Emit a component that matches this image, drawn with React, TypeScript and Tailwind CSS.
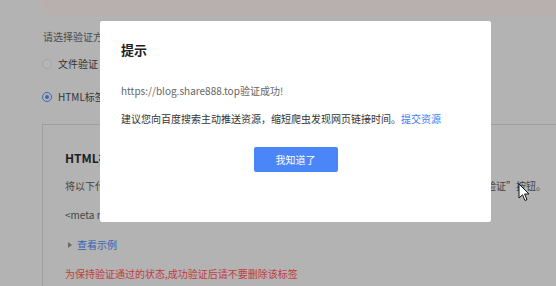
import React from 'react';

const font = { fontFamily: '"Noto Sans CJK SC", "Noto Sans", sans-serif' };

function Radio({ checked, label }: { checked?: boolean; label: string }) {
  return (
    <div className="flex items-center gap-[6px] h-[16px]">
      {checked ? (
        <span className="flex h-[10px] w-[10px] items-center justify-center rounded-full border border-[#4067b0]">
          <span className="h-[4px] w-[4px] rounded-full bg-[#4067b0]" />
        </span>
      ) : (
        <span className="h-[10px] w-[10px] rounded-full border border-[#a6a6a6] bg-[#b6b6b6]" />
      )}
      <span className="text-[10px] leading-[16px] text-[#333]">{label}</span>
    </div>
  );
}

function Cursor() {
  return (
    <svg className="absolute left-[518px] top-[183px]" width="13" height="19" viewBox="0 0 13 19">
      <path d="M1 1 L1 15 L4.5 11.8 L7 17.5 L9 16.6 L6.6 11 L11 11 Z" fill="#fff" stroke="#111" strokeWidth="1" strokeLinejoin="round" />
    </svg>
  );
}

export default function App() {
  return (
    <div className="relative h-[286px] w-[556px] overflow-hidden bg-[#b3b3b3]" style={font}>
      {/* page under the mask */}
      <div className="ml-[42px] h-[15px] bg-[#b8afaf]" />
      <div className="mt-[16px] pl-[43px] text-[10px] leading-[12px] text-[#4d4d4d]">请选择验证方式</div>
      <div className="ml-[100px] mt-[-1px] h-[13px] w-[2px] bg-[#4a7ad8]" />
      <div className="mt-[1px] pl-[42px]">
        <Radio label="文件验证" />
      </div>
      <div className="mt-[17px] pl-[42px]">
        <Radio checked label="HTML标签验证" />
      </div>
      <div className="ml-[42px] mt-[19px] h-[200px] border-l border-t border-[#9f9f9f] pl-[22px] pt-[24px]">
        <div className="text-[12px] font-bold leading-[18px] text-[#1e1e1e]">HTML标签验证</div>
        <div className="mt-[12px] flex justify-between pr-[10px] text-[10px] leading-[14px] text-[#444]">
          <span>将以下代码添加到您的网站首页HTML代码的head标签中</span>
          <span>完成后点击“验证”按钮。</span>
        </div>
        <div className="mt-[15px] text-[10px] leading-[14px] text-[#444]">&lt;meta name="baidu-site-verification" /&gt;</div>
        <div className="mt-[16px] flex items-center gap-[5px] pl-[3px] text-[10px] leading-[14px] text-[#3a61b2]">
          <span className="h-0 w-0 border-y-[3px] border-l-[4px] border-y-transparent border-l-[#6a6a6a]" />
          <span>查看示例</span>
        </div>
        <div className="mt-[15px] text-[10px] leading-[14px] text-[#c23c3c]">为保持验证通过的状态,成功验证后请不要删除该标签</div>
      </div>

      {/* dialog */}
      <div className="absolute left-[100px] top-[21px] h-[201px] w-[391px] rounded-[2px] bg-white px-[21px] pt-[19px]">
        <div className="text-[13px] font-bold leading-[20px] text-[#222]">提示</div>
        <div className="mt-[23px] text-[10px] leading-[16px] text-[#666]">https://blog.share888.top验证成功!</div>
        <div className="mt-[12px] text-[10px] leading-[16px] text-[#333]">
          建议您向百度搜索主动推送资源，缩短爬虫发现网页链接时间。<span className="text-[#3d7df3]">提交资源</span>
        </div>
        <div className="mt-[20px] flex justify-center">
          <button className="h-[25px] w-[84px] rounded-[2px] bg-[#4b86f8] text-[10px] text-white">我知道了</button>
        </div>
      </div>

      <Cursor />
    </div>
  );
}
